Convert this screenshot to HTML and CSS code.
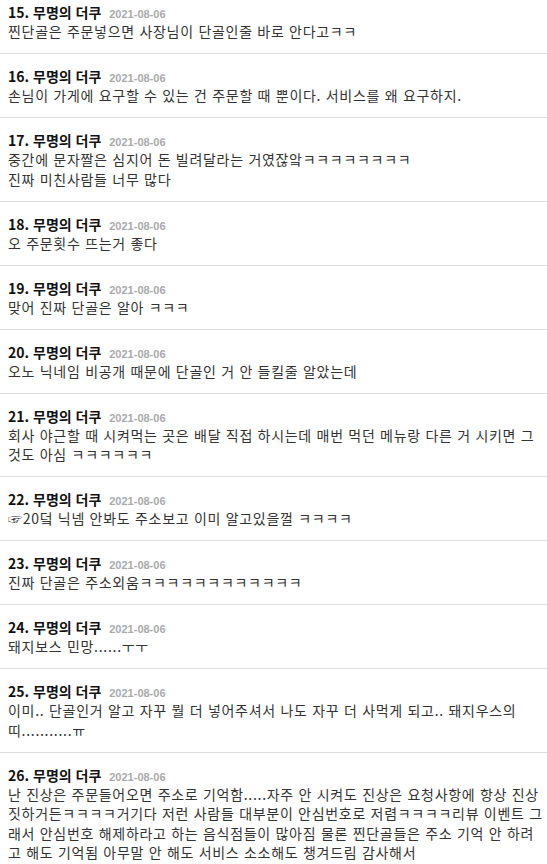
FILE: index.html
```html
<!DOCTYPE html>
<html lang="ko">
<head>
    <meta charset="UTF-8">
    <meta name="viewport" content="width=device-width, initial-scale=1.0">
    <title>댓글</title>
    <link rel="stylesheet" href="styles.css">
</head>
<body>

    <ul class="comments">
        <li class="comment">
            <div class="head"><b>15. 무명의 더쿠</b> <span class="date">2021-08-06</span></div>
            <p>찐단골은 주문넣으면 사장님이 단골인줄 바로 안다고ㅋㅋ</p>
        </li>
        <li class="comment">
            <div class="head"><b>16. 무명의 더쿠</b> <span class="date">2021-08-06</span></div>
            <p>손님이 가게에 요구할 수 있는 건 주문할 때 뿐이다. 서비스를 왜 요구하지.</p>
        </li>
        <li class="comment">
            <div class="head"><b>17. 무명의 더쿠</b> <span class="date">2021-08-06</span></div>
            <p>중간에 문자짤은 심지어 돈 빌려달라는 거였잖앜ㅋㅋㅋㅋㅋㅋㅋㅋ<br>진짜 미친사람들 너무 많다</p>
        </li>
        <li class="comment">
            <div class="head"><b>18. 무명의 더쿠</b> <span class="date">2021-08-06</span></div>
            <p>오 주문횟수 뜨는거 좋다</p>
        </li>
        <li class="comment">
            <div class="head"><b>19. 무명의 더쿠</b> <span class="date">2021-08-06</span></div>
            <p>맞어 진짜 단골은 알아 ㅋㅋㅋ</p>
        </li>
        <li class="comment">
            <div class="head"><b>20. 무명의 더쿠</b> <span class="date">2021-08-06</span></div>
            <p>오노 닉네임 비공개 때문에 단골인 거 안 들킬줄 알았는데</p>
        </li>
        <li class="comment">
            <div class="head"><b>21. 무명의 더쿠</b> <span class="date">2021-08-06</span></div>
            <p>회사 야근할 때 시켜먹는 곳은 배달 직접 하시는데 매번 먹던 메뉴랑 다른 거 시키면 그것도 아심 ㅋㅋㅋㅋㅋㅋ</p>
        </li>
        <li class="comment">
            <div class="head"><b>22. 무명의 더쿠</b> <span class="date">2021-08-06</span></div>
            <p><span class="hand">☞</span>20덬 닉넴 안봐도 주소보고 이미 알고있을껄 ㅋㅋㅋㅋ</p>
        </li>
        <li class="comment">
            <div class="head"><b>23. 무명의 더쿠</b> <span class="date">2021-08-06</span></div>
            <p>진짜 단골은 주소외움ㅋㅋㅋㅋㅋㅋㅋㅋㅋㅋㅋㅋ</p>
        </li>
        <li class="comment">
            <div class="head"><b>24. 무명의 더쿠</b> <span class="date">2021-08-06</span></div>
            <p>돼지보스 민망......ㅜㅜ</p>
        </li>
        <li class="comment">
            <div class="head"><b>25. 무명의 더쿠</b> <span class="date">2021-08-06</span></div>
            <p>이미.. 단골인거 알고 자꾸 뭘 더 넣어주셔서 나도 자꾸 더 사먹게 되고.. 돼지우스의 띠...........ㅠ</p>
        </li>
        <li class="comment">
            <div class="head"><b>26. 무명의 더쿠</b> <span class="date">2021-08-06</span></div>
            <p>난 진상은 주문들어오면 주소로 기억함.....자주 안 시켜도 진상은 요청사항에 항상 진상짓하거든ㅋㅋㅋㅋ거기다 저런 사람들 대부분이 안심번호로 저렴ㅋㅋㅋㅋ리뷰 이벤트 그래서 안심번호 해제하라고 하는 음식점들이 많아짐 물론 찐단골들은 주소 기억 안 하려고 해도 기억됨 아무말 안 해도 서비스 소소해도 챙겨드림 감사해서</p>
        </li>
    </ul>

</body>
</html>
```

FILE: styles.css
```css
body {
    margin: 0;
    background-color: #fff;
    font-family: "Noto Sans CJK KR", "Noto Sans", sans-serif;
    color: #333;
}
.comments {
    list-style: none;
    margin: -10px 0 0 0;
    padding: 0;
}
.comment {
    padding: 12px 0 11.5px 8px;
    border-bottom: 1px solid #ddd;
}
.head {
    font-size: 14px;
    line-height: 20px;
    height: 20px;
    color: #111;
}
.head b {
    font-weight: 700;
}
.date {
    font-family: "Liberation Sans", Arial, sans-serif;
    font-size: 11px;
    line-height: 10px;
    font-weight: 700;
    color: #aaa;
    margin-left: 4px;
}
.comment p {
    margin: 0;
    font-size: 14px;
    line-height: 19.5px;
    letter-spacing: 0.7px;
}
```
